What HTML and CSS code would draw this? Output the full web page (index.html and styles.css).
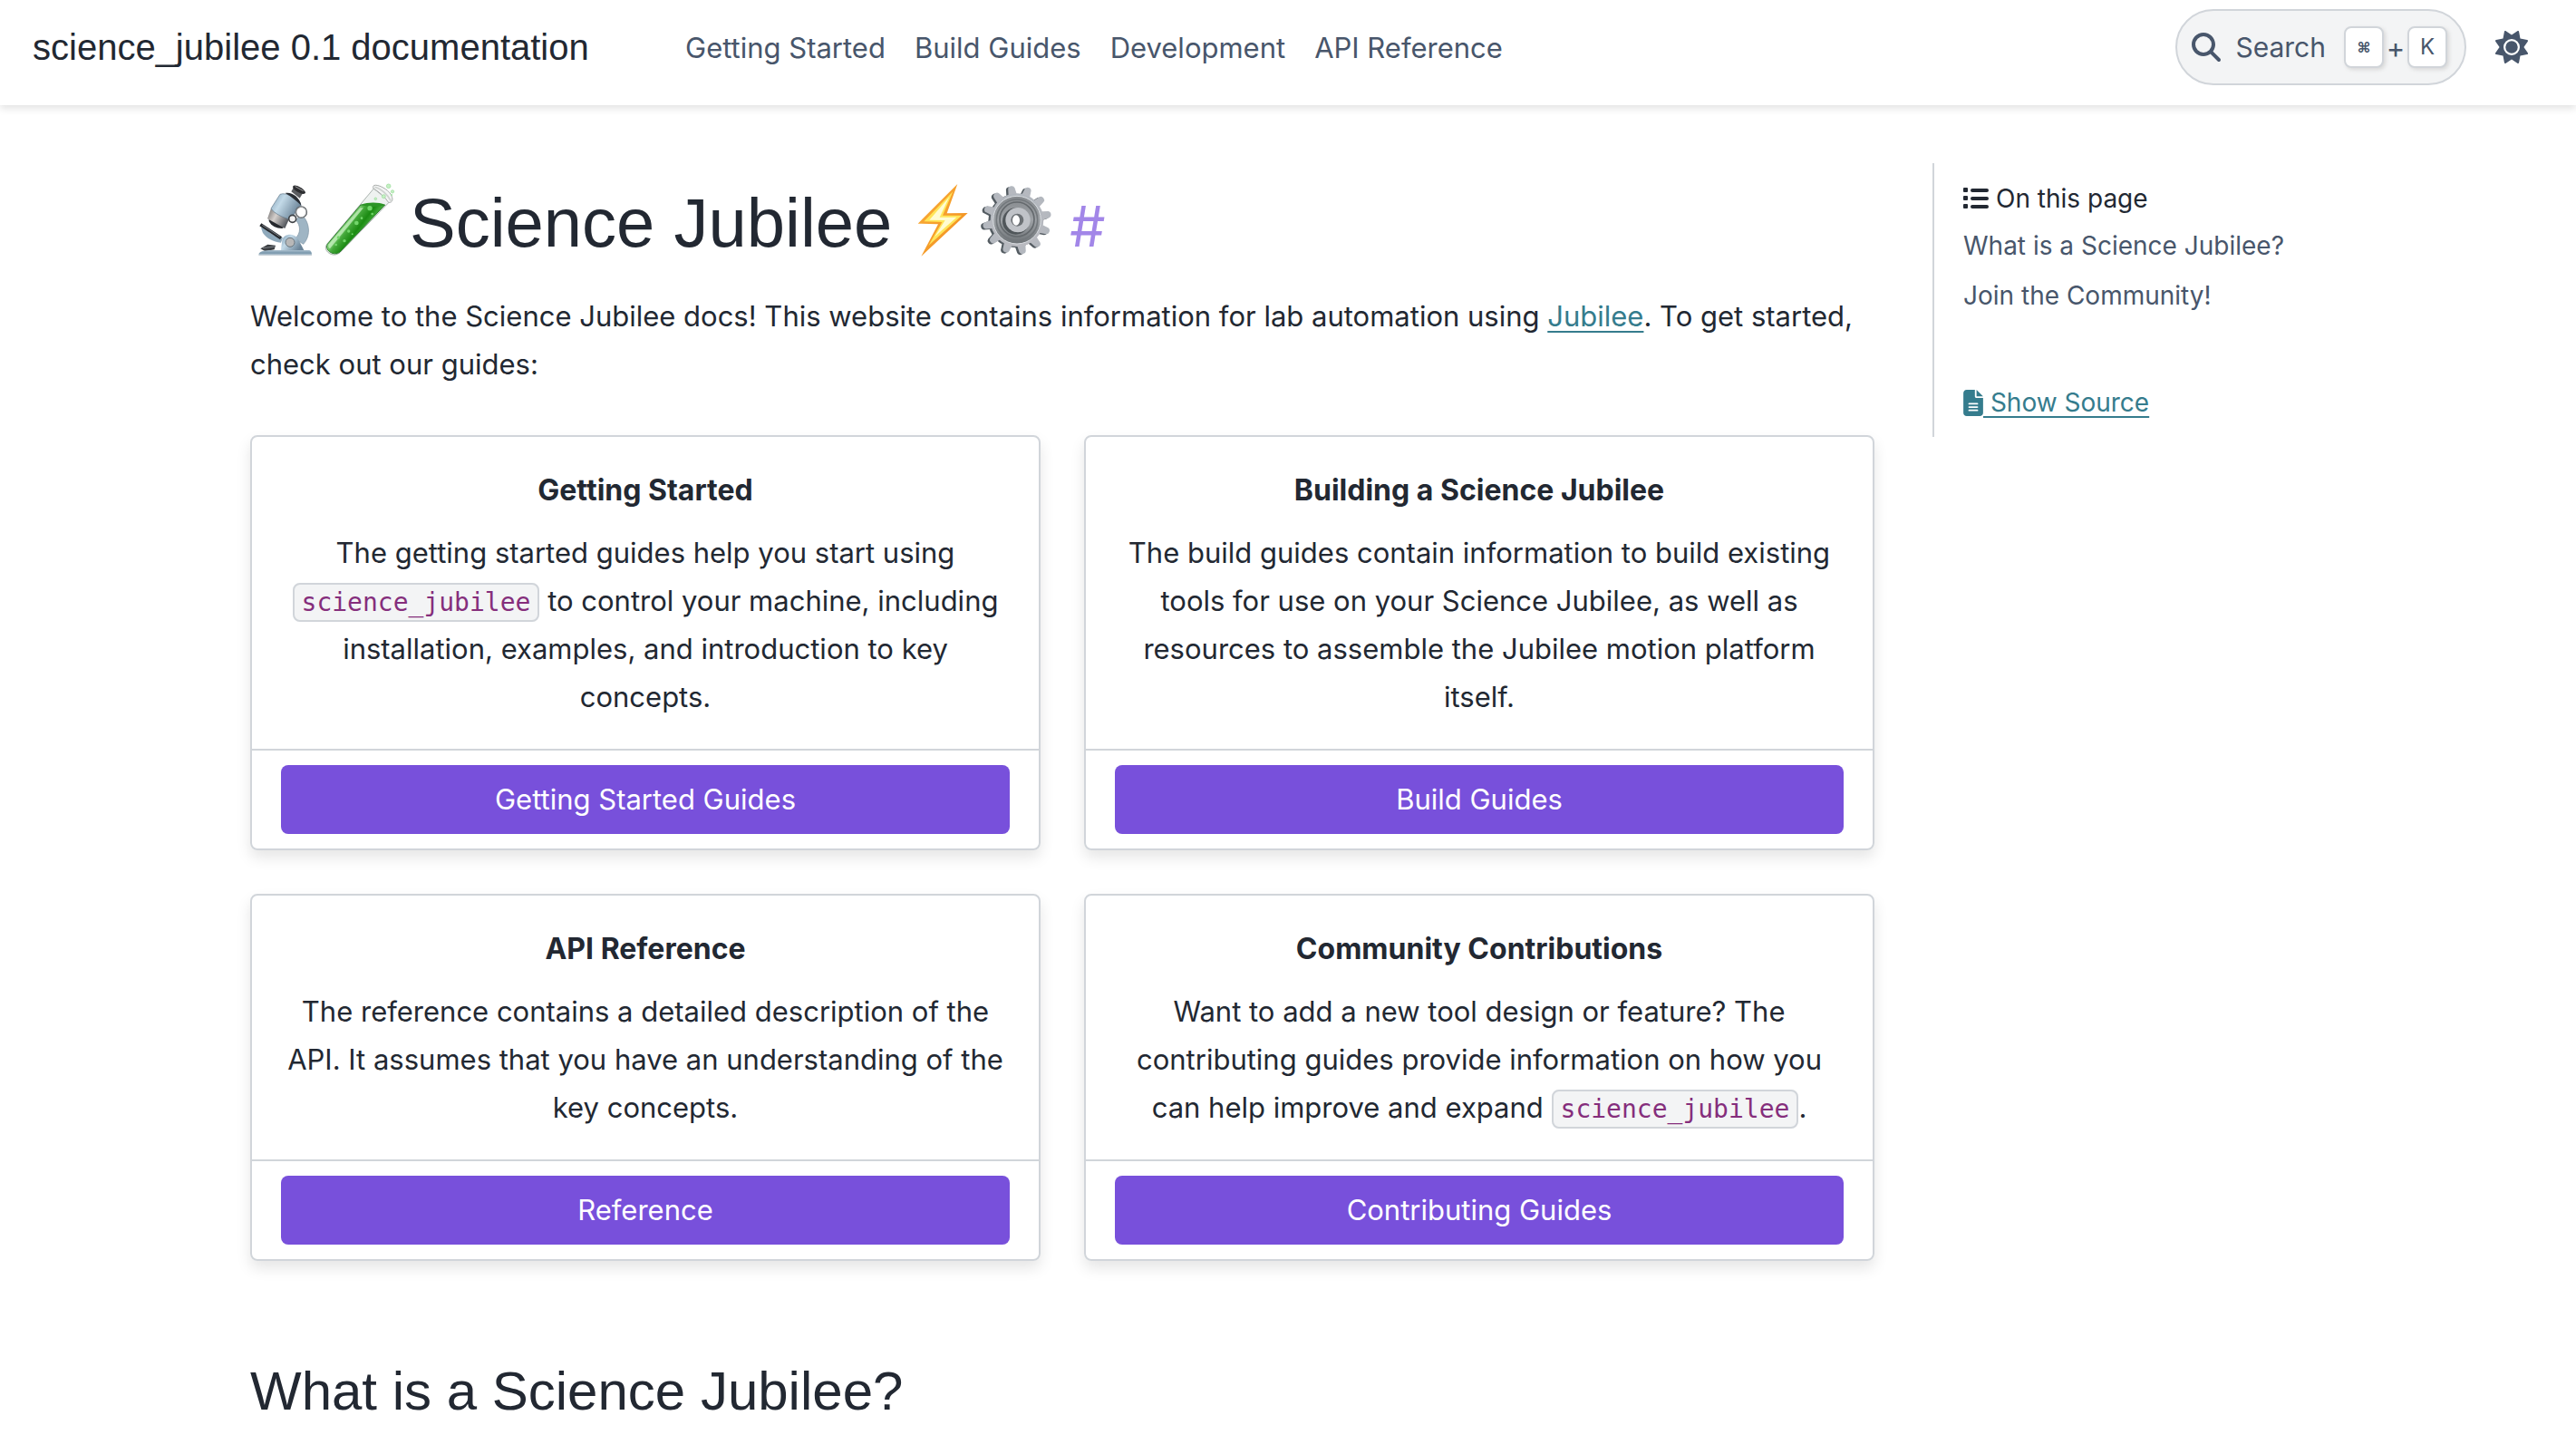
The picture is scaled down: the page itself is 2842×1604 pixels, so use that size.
FILE: index.html
```html
<!DOCTYPE html>
<html lang="en">
<head>
<meta charset="utf-8">
<meta name="viewport" content="width=device-width, initial-scale=1">
<title>science_jubilee 0.1 documentation</title>
<link rel="stylesheet" href="styles.css">
</head>
<body>
<header class="header">
  <a class="brand" href="#top">science_jubilee 0.1 documentation</a>
  <nav class="nav" aria-label="Site navigation">
    <a href="#getting-started">Getting Started</a>
    <a href="#build-guides">Build Guides</a>
    <a href="#development">Development</a>
    <a href="#api">API Reference</a>
  </nav>
  <div class="tools">
    <button class="search" type="button">
      <svg class="search-icon" viewBox="0 0 512 512" aria-hidden="true"><path fill="currentColor" d="M416 208c0 45.900-14.900 88.300-40 122.700L502.600 457.400c12.500 12.500 12.500 32.800 0 45.300s-32.800 12.500-45.300 0L330.700 376c-34.400 25.200-76.800 40-122.700 40C93.100 416 0 322.900 0 208S93.100 0 208 0S416 93.100 416 208zM208 352a144 144 0 1 0 0-288 144 144 0 1 0 0 288z"/></svg>
      <span class="search-label">Search</span>
      <span class="keys"><kbd class="key key-cmd">⌘</kbd><span class="plus">+</span><kbd class="key">K</kbd></span>
    </button>
    <button class="theme" type="button" aria-label="Light mode">
      <svg viewBox="0 0 512 512" aria-hidden="true"><path fill="currentColor" d="M361.500 1.200c5 2.100 8.600 6.600 9.600 11.900L391 121l107.900 19.800c5.300 1 9.800 4.600 11.900 9.600s1.500 10.700-1.600 15.200L446.900 256l62.300 90.300c3.100 4.500 3.700 10.200 1.600 15.200s-6.600 8.600-11.900 9.600L391 391 371.100 498.900c-1 5.300-4.600 9.800-9.600 11.900s-10.700 1.500-15.200-1.600L256 446.900l-90.300 62.300c-4.500 3.100-10.200 3.700-15.200 1.600s-8.600-6.600-9.600-11.900L121 391 13.100 371.100c-5.300-1-9.800-4.600-11.900-9.600s-1.500-10.700 1.600-15.200L65.100 256 2.800 165.700c-3.100-4.500-3.700-10.200-1.600-15.200s6.600-8.600 11.900-9.600L121 121 140.900 13.100c1-5.300 4.600-9.800 9.600-11.900s10.700-1.500 15.200 1.600L256 65.100 346.300 2.800c4.500-3.100 10.200-3.700 15.200-1.600zM160 256a96 96 0 1 1 192 0 96 96 0 1 1 -192 0zm224 0a128 128 0 1 0 -256 0 128 128 0 1 0 256 0z"/></svg>
    </button>
  </div>
</header>

<div class="page" id="top">
  <main class="article">
    <h1>
      <span class="emoji-pair">
        <svg class="emoji" viewBox="48 60 240 276" role="img" aria-label="Microscope">
          <defs>
            <linearGradient id="steel" x1="0" y1="0" x2="1" y2="0.500"><stop offset="0" stop-color="#7d9db5"/><stop offset=".4" stop-color="#c3dae8"/><stop offset="1" stop-color="#6b8498"/></linearGradient>
            <linearGradient id="base" x1="0" y1="0" x2="0" y2="1"><stop offset="0" stop-color="#a9bfce"/><stop offset=".6" stop-color="#7795aa"/><stop offset="1" stop-color="#c8d6df"/></linearGradient>
            <linearGradient id="lens" x1="0" y1="0" x2="1" y2=".5"><stop offset="0" stop-color="#6c6a6a"/><stop offset=".45" stop-color="#d5d0cd"/><stop offset="1" stop-color="#565a60"/></linearGradient>
          </defs>
          <path d="M215 168C244 190 252 238 224 268L196 250C218 232 214 204 200 190Z" fill="#9fb5c4" stroke="#7890a0" stroke-width="2"/>
          <path d="M84 214L90 231C104 250 124 260 150 263L156 246C128 243 108 232 98 212Z" fill="#8fa9bb"/>
          <path d="M82 203L150 248" stroke="#25282d" stroke-width="11"/>
          <path d="M88 205L146 243" stroke="#a9b0b7" stroke-width="2"/>
          <path d="M82 283L106 269L132 272L128 286L98 292Z" fill="#3b3e42"/>
          <path d="M90 281L130 276" stroke="#9ea4aa" stroke-width="2"/>
          <path d="M150 288L154 254C160 232 194 230 206 250L226 288Z" fill="url(#steel)"/>
          <path d="M76 303C76 292 94 288 126 288H240C249 288 252 294 252 304Z" fill="url(#base)"/>
          <path d="M76 303H252V306H76Z" fill="#c5ced5"/>
          <circle cx="180" cy="262" r="15" fill="#b8b8b8" stroke="#68747d" stroke-width="3"/>
          <path d="M110 184L164 210L154 216C134 216 118 208 110 192Z" fill="#25282d"/>
          <path d="M117 150L178 183L163 216L105 184Z" fill="url(#lens)"/>
          <path d="M147 103C166 94 216 120 216 139L181 186C156 181 126 165 117 150Z" fill="url(#steel)" stroke="#64798a" stroke-width="2"/>
          <path d="M164 99C184 94 213 112 217 140C202 126 184 110 164 99Z" fill="#292e34"/>
          <path d="M184 94L192 80L224 96L212 116Z" fill="#5b5d60"/>
          <path d="M190 76C195 66 230 86 231 97C231 103 221 103 213 99C201 94 186 85 190 76Z" fill="#2c2d30"/>
          <path d="M197 77L224 92" stroke="#a4a4a4" stroke-width="3"/>
          <circle cx="217" cy="162" r="18" fill="#fff" stroke="#55595d" stroke-width="5"/>
          <circle cx="217" cy="162" r="17" fill="none" stroke="#c1c4c6" stroke-width="2"/>
          <circle cx="188" cy="184" r="12" fill="#f2f2f2" stroke="#3f4347" stroke-width="5"/>
        </svg><svg class="emoji" viewBox="288 60 240 276" role="img" aria-label="Test tube">
          <defs>
            <linearGradient id="fluid" gradientUnits="userSpaceOnUse" x1="365" y1="195" x2="425" y2="240"><stop offset="0" stop-color="#8edb83"/><stop offset=".25" stop-color="#45a93b"/><stop offset=".6" stop-color="#1b8b12"/><stop offset="1" stop-color="#53b949"/></linearGradient>
          </defs>
          <path d="M457 84L302 268C286 290 322 316 345 296L510 127Z" fill="#eef2f0" stroke="#aab3ae" stroke-width="3"/>
          <path d="M414 138H494L345 294C326 309 293 290 304 268Z" fill="url(#fluid)" stroke="#2b7d2b" stroke-width="3"/>
          <path d="M414 138C440 128 474 129 494 138C470 146 440 146 414 138Z" fill="#2c9426"/>
          <path d="M412 148L309 268C306 274 307 279 312 283L423 148Z" fill="#c9f0c3" opacity=".75"/>
          <path d="M456 84C448 64 484 73 506 94C522 110 524 132 506 130C494 112 474 94 456 84Z" fill="#f4f5f5" stroke="#a9adab" stroke-width="3"/>
          <path d="M460 79C480 83 504 105 514 125" fill="none" stroke="#d0d3d1" stroke-width="5"/>
          <g fill="#72d66a"><circle cx="444" cy="149" r="8"/><circle cx="400" cy="198" r="7"/><circle cx="417" cy="182" r="4"/><circle cx="374" cy="225" r="5"/><circle cx="452" cy="168" r="4"/><circle cx="340" cy="246" r="5"/><circle cx="360" cy="257" r="5"/><circle cx="386" cy="235" r="3"/><circle cx="332" cy="270" r="4"/></g>
          <g fill="#c5efc4" stroke="#98dd98" stroke-width="2"><circle cx="506" cy="76" r="7"/><circle cx="519" cy="94" r="5"/><circle cx="516" cy="105" r="2"/><circle cx="490" cy="110" r="6"/><circle cx="463" cy="118" r="4"/></g>
        </svg>
      </span>
      <span>Science Jubilee</span>
      <span class="emoji-pair">
        <svg class="emoji" viewBox="72 60 240 276" role="img" aria-label="High voltage">
          <defs>
            <linearGradient id="bolt" x1="0" y1="0" x2="1" y2="1"><stop offset="0" stop-color="#fbb03a"/><stop offset="1" stop-color="#f08b1d"/></linearGradient>
          </defs>
          <path d="M241 69L110 200L177 202L121 308L275 165L206 166Z" fill="url(#bolt)"/>
          <path d="M226 94L130 193L190 195L145 273L255 173L192 173Z" fill="#ffe558"/>
          <path d="M214 112L148 188L200 189L166 243L238 179L182 179Z" fill="#fffcd2"/>
        </svg><svg class="emoji" viewBox="312 60 240 276" role="img" aria-label="Gear">
          <defs>
            <path id="tooth" d="M423 116L427 82Q429 74 438 74Q447 74 449 82L454 116Z"/>
            <g id="teeth">
              <use href="#tooth" transform="rotate(-10 438 188)"/><use href="#tooth" transform="rotate(20 438 188)"/><use href="#tooth" transform="rotate(50 438 188)"/><use href="#tooth" transform="rotate(80 438 188)"/><use href="#tooth" transform="rotate(110 438 188)"/><use href="#tooth" transform="rotate(140 438 188)"/><use href="#tooth" transform="rotate(170 438 188)"/><use href="#tooth" transform="rotate(200 438 188)"/><use href="#tooth" transform="rotate(230 438 188)"/><use href="#tooth" transform="rotate(260 438 188)"/><use href="#tooth" transform="rotate(290 438 188)"/><use href="#tooth" transform="rotate(320 438 188)"/>
              <circle cx="438" cy="188" r="88"/>
            </g>
            <linearGradient id="metal" x1="0" y1="0" x2="0" y2="1"><stop offset="0" stop-color="#b2b7be"/><stop offset="1" stop-color="#b9bac0"/></linearGradient>
            <linearGradient id="dish" x1="0" y1="0" x2="0" y2="1"><stop offset="0" stop-color="#85898d"/><stop offset=".5" stop-color="#9ea2a6"/><stop offset="1" stop-color="#6d7276"/></linearGradient>
          </defs>
          <use href="#teeth" fill="#545c62" transform="translate(-7 3)"/>
          <use href="#teeth" fill="url(#metal)"/>
          <circle cx="438" cy="188" r="79" fill="url(#dish)" stroke="#d9dde1" stroke-width="3"/>
          <circle cx="438" cy="188" r="68" fill="none" stroke="#73787c" stroke-width="5"/>
          <circle cx="438" cy="186" r="57" fill="none" stroke="#64696d" stroke-width="5"/>
          <circle cx="434" cy="192" r="44" fill="#50565a"/>
          <circle cx="441" cy="188" r="41" fill="#c0c3c8"/>
          <circle cx="439" cy="188" r="21" fill="#6c7175"/>
          <ellipse cx="435" cy="189" rx="12" ry="17" fill="#fff"/>
        </svg>
      </span>
      <a class="headerlink" href="#top">#</a>
    </h1>
    <p class="intro">Welcome to the Science Jubilee docs! This website contains information for lab automation using <a href="#jubilee">Jubilee</a>. To get started, check out our guides:</p>

    <div class="cards">
      <section class="card">
        <div class="card-body">
          <h3>Getting Started</h3>
          <p>The getting started guides help you start using <code>science_jubilee</code> to control your machine, including installation, examples, and introduction to key concepts.</p>
        </div>
        <div class="card-footer"><a class="btn" href="#getting-started">Getting Started Guides</a></div>
      </section>
      <section class="card">
        <div class="card-body">
          <h3>Building a Science Jubilee</h3>
          <p>The build guides contain information to build existing tools for use on your Science Jubilee, as well as resources to assemble the Jubilee motion platform itself.</p>
        </div>
        <div class="card-footer"><a class="btn" href="#build-guides">Build Guides</a></div>
      </section>
      <section class="card">
        <div class="card-body">
          <h3>API Reference</h3>
          <p>The reference contains a detailed description of the API. It assumes that you have an understanding of the key concepts.</p>
        </div>
        <div class="card-footer"><a class="btn" href="#api">Reference</a></div>
      </section>
      <section class="card">
        <div class="card-body">
          <h3>Community Contributions</h3>
          <p>Want to add a new tool design or feature? The contributing guides provide information on how you can help improve and expand <code>science_jubilee</code>.</p>
        </div>
        <div class="card-footer"><a class="btn" href="#contributing">Contributing Guides</a></div>
      </section>
    </div>

    <h2 id="what">What is a Science Jubilee?</h2>
  </main>

  <aside class="toc">
    <div class="toc-title">
      <svg class="list-icon" viewBox="0 0 28 24" aria-hidden="true"><g fill="currentColor"><rect width="5" height="5" y="0" rx="1"/><rect width="5" height="5" y="9" rx="1"/><rect width="5" height="5" y="18" rx="1"/><rect x="8" y="1" width="20" height="4" rx="2"/><rect x="8" y="10" width="20" height="4" rx="2"/><rect x="8" y="19" width="20" height="4" rx="2"/></g></svg>
      On this page
    </div>
    <nav class="toc-list" aria-label="On this page">
      <a href="#what">What is a Science Jubilee?</a>
      <a href="#community">Join the Community!</a>
    </nav>
    <a class="source" href="#source">
      <svg class="file-icon" viewBox="0 0 384 512" aria-hidden="true"><path fill="currentColor" d="M64 0C28.700 0 0 28.700 0 64V448c0 35.300 28.700 64 64 64H320c35.300 0 64-28.700 64-64V160H256c-17.700 0-32-14.300-32-32V0H64zM256 0V128H384L256 0zM112 256H272c8.800 0 16 7.200 16 16s-7.200 16-16 16H112c-8.800 0-16-7.200-16-16s7.200-16 16-16zm0 64H272c8.800 0 16 7.200 16 16s-7.200 16-16 16H112c-8.800 0-16-7.200-16-16s7.200-16 16-16zm0 64H272c8.800 0 16 7.200 16 16s-7.200 16-16 16H112c-8.800 0-16-7.200-16-16s7.200-16 16-16z"/></svg><span>&nbsp;Show Source</span>
    </a>
  </aside>
</div>
</body>
</html>
```
FILE: styles.css
```css
* { box-sizing: border-box; }

:root {
  --text: #222832;
  --muted: #48566b;
  --border: #d1d5da;
  --surface: #f3f4f5;
  --link: #357c8d;
  --accent: #7850db;
  --display: "Liberation Sans", Arial, sans-serif;
}

body {
  margin: 0;
  background: #fff;
  color: var(--text);
  font: 31px/53px Inter, "Liberation Sans", sans-serif;
}

h1, h2, h3, p { margin: 0; }
a { color: inherit; text-decoration: none; }
button { font: inherit; color: var(--muted); cursor: pointer; }
svg { display: block; flex: none; }

.header {
  display: flex;
  align-items: center;
  gap: 32px;
  height: 116px;
  padding: 0 53px 12px 36px;
  box-shadow: 0 4px 8px #e4e4e4;
}
.brand { min-width: 688px; font-family: var(--display); font-size: 40px; white-space: nowrap; }
.nav { display: flex; gap: 32px; color: var(--muted); white-space: nowrap; }
.tools { display: flex; align-items: center; gap: 32px; margin-left: auto; }
.search {
  display: flex;
  align-items: center;
  gap: 16px;
  height: 84px;
  padding: 0 19px 0 16px;
  border: 2px solid var(--border);
  border-radius: 42px;
  background: var(--surface);
}
.search-icon { width: 32px; height: 32px; }
.search-label { font-size: 30px; }
.keys { display: flex; align-items: center; margin-left: 4px; }
.key {
  display: flex;
  align-items: center;
  justify-content: center;
  width: 44px;
  height: 46px;
  border: 2px solid var(--border);
  border-radius: 8px;
  background: #fff;
  box-shadow: 2px 2px 4px #d8d8d8;
  font: 24px/24px Inter, sans-serif;
}
.key-cmd { font-size: 16px; font-weight: 700; }
.plus { width: 26px; text-align: center; }
.theme { padding: 0; border: 0; background: none; }
.theme svg { width: 36px; height: 36px; }

.page {
  display: grid;
  grid-template-columns: minmax(0, 1fr) 434px;
  align-items: start;
  gap: 64px;
  max-width: 2354px;
  margin: 0 auto;
  padding: 64px 32px 0;
}

.article { padding-top: 20px; }
h1, h2 { font-family: var(--display); font-weight: 400; }
h1 {
  display: flex;
  align-items: baseline;
  gap: 16px;
  margin-bottom: 30px;
  font-size: 76px;
  line-height: 92px;
}
.emoji-pair { display: flex; align-self: center; }
.emoji { width: 80px; height: 92px; }
.headerlink { margin-left: 4px; color: #a286e8; font-family: Inter, sans-serif; font-size: 62px; line-height: 80px; }
.intro { margin-bottom: 52px; }
.intro a { color: var(--link); }
.intro a, .source span {
  text-decoration: underline;
  text-decoration-thickness: 2px;
  text-underline-offset: 5px;
  text-decoration-skip-ink: none;
}

.cards { display: grid; grid-template-columns: 1fr 1fr; gap: 48px; }
.card {
  display: flex;
  flex-direction: column;
  border: 2px solid var(--border);
  border-radius: 8px;
  box-shadow: 0 8px 16px rgba(0, 0, 0, 0.1);
  text-align: center;
}
.card-body { flex: 1; padding: 32px 32px 31px; }
h3 { margin-bottom: 16px; font-size: 32px; line-height: 53px; font-weight: 700; }
.card-footer { padding: 16px 32px; border-top: 2px solid var(--border); }
.btn {
  display: block;
  padding: 12px 24px;
  border-radius: 8px;
  background: var(--accent);
  color: #fff;
  line-height: 52px;
}
code {
  padding: 3px 8px;
  border: 2px solid var(--border);
  border-radius: 8px;
  background: var(--surface);
  color: #852e7c;
  font: 28px/40px "DejaVu Sans Mono", monospace;
}

h2 { margin-top: 109px; font-size: 60px; line-height: 70px; }

.toc {
  padding: 18px 0 17px 32px;
  border-left: 2px solid var(--border);
  font-size: 28px;
  line-height: 42px;
}
.toc-title { display: flex; align-items: center; gap: 8px; }
.list-icon { width: 28px; height: 24px; }
.toc-list { display: flex; flex-direction: column; gap: 13px; margin: 10px 0 76px; color: var(--muted); }
.source { display: flex; align-items: center; color: var(--link); }
.file-icon { width: 22px; height: 29px; }
```
